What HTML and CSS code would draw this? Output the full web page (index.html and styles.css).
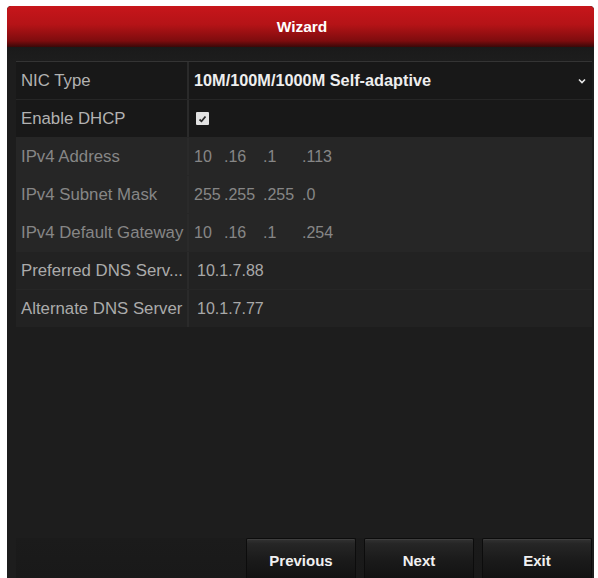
FILE: index.html
```html
<!DOCTYPE html>
<html>
<head>
<meta charset="utf-8">
<link rel="stylesheet" href="styles.css">
</head>
<body>
<div class="panel">
  <div class="header">Wizard</div>
  <div class="body">
    <div class="rows">
      <div class="row on">
        <div class="label">NIC Type</div>
        <div class="value sel">
          <span class="seltext">10M/100M/1000M Self-adaptive</span>
          <svg class="chev" width="8" height="6" viewBox="0 0 8 6"><path d="M1 1.5 L4 4.5 L7 1.5" fill="none" stroke="#e8e8e8" stroke-width="1.6"/></svg>
        </div>
      </div>
      <div class="row on">
        <div class="label">Enable DHCP</div>
        <div class="value">
          <span class="check"><svg width="9" height="8" viewBox="0 0 9 8"><path d="M1.5 4.5 L3.5 6.3 L7.5 1.5" fill="none" stroke="#2a2a2a" stroke-width="1.8"/></svg></span>
        </div>
      </div>
      <div class="row off">
        <div class="label">IPv4 Address</div>
        <div class="value ip"><span class="o1">10</span><span class="o">.16</span><span class="o">.1</span><span class="o">.113</span></div>
      </div>
      <div class="row off">
        <div class="label">IPv4 Subnet Mask</div>
        <div class="value ip"><span class="o1">255</span><span class="o">.255</span><span class="o">.255</span><span class="o">.0</span></div>
      </div>
      <div class="row off">
        <div class="label">IPv4 Default Gateway</div>
        <div class="value ip"><span class="o1">10</span><span class="o">.16</span><span class="o">.1</span><span class="o">.254</span></div>
      </div>
      <div class="row dns">
        <div class="label">Preferred DNS Serv...</div>
        <div class="value dv">10.1.7.88</div>
      </div>
      <div class="row dns">
        <div class="label">Alternate DNS Server</div>
        <div class="value dv">10.1.7.77</div>
      </div>
    </div>
    <div class="footer">
      <button class="btn">Previous</button>
      <button class="btn">Next</button>
      <button class="btn">Exit</button>
    </div>
  </div>
</div>
</body>
</html>
```
FILE: styles.css
```css
html, body {
  margin: 0;
  padding: 0;
  background: #ffffff;
}
body {
  padding: 6px 4px 0 7px;
  height: 578px;
  box-sizing: border-box;
  overflow: hidden;
  font-family: "Liberation Sans", Arial, sans-serif;
}
.panel {
  width: 587px;
  height: 572px;
  background: #1d1d1d;
  border-radius: 4px 4px 0 0;
  display: flex;
  flex-direction: column;
  overflow: hidden;
}
.header {
  height: 41px;
  background: linear-gradient(to bottom, #c7161b 0%, #b51317 45%, #7e0c0e 85%, #3a0808 100%);
  color: #ffffff;
  font-weight: bold;
  font-size: 15.5px;
  display: flex;
  align-items: center;
  justify-content: center;
  padding-left: 3px;
  border-radius: 4px 4px 0 0;
}
.body {
  flex: 1;
  display: flex;
  flex-direction: column;
  padding: 0 2px 0 9px;
  background: linear-gradient(to bottom, #1a1a1a 0px, #1d1d1d 14px);
}
.rows {
  margin-top: 14px;
  border-top: 1px solid #343434;
  display: flex;
  flex-direction: column;
  gap: 1px;
  background: #262626;
}
.row {
  height: 37px;
  display: flex;
  gap: 2px;
  font-size: 16.8px;
  background: #2a2a2a;
}
.label {
  width: 166px;
  padding-left: 5px;
  display: flex;
  align-items: center;
  white-space: nowrap;
  overflow: hidden;
}
.value {
  flex: 1;
  display: flex;
  align-items: center;
  padding-left: 5px;
  position: relative;
  font-size: 16px;
}
.row.on .label, .row.on .value { background: #181818; }
.row.on .label { color: #b2b2b2; }
.row.off .label, .row.off .value { background: #262626; }
.row.off .label { color: #868686; }
.row.off .value { color: #868686; }
.row.dns .label, .row.dns .value { background: #222222; }
.row.dns .label { color: #ababab; }
.row.dns .value { color: #a8a8a8; padding-left: 8px; }
.sel { justify-content: space-between; padding-right: 6px; }
.seltext { color: #eeeeee; font-weight: bold; font-size: 16.3px; }
.chev { margin-top: 1px; }
.check {
  width: 13px;
  height: 13px;
  margin-left: 2px;
  background: #e2e2e2;
  border-radius: 1px;
  display: flex;
  align-items: center;
  justify-content: center;
}
.ip .o1 { width: 30px; }
.ip .o { width: 39px; }
.footer {
  margin-top: auto;
  display: flex;
  justify-content: flex-end;
  gap: 8px;
  height: 40px;
  background: linear-gradient(to bottom, #1b1b1b, #191919);
}
.btn {
  width: 110px;
  height: 40px;
  margin: 0;
  border: 1px solid #0c0c0c;
  border-bottom: none;
  border-radius: 2px 2px 0 0;
  background: linear-gradient(to bottom, #333333 0%, #262626 12%, #1a1a1a 55%, #121212 100%);
  box-shadow: inset 0 1px 0 #3e3e3e;
  color: #f0f0f0;
  font-family: "Liberation Sans", Arial, sans-serif;
  font-weight: bold;
  font-size: 15px;
  padding: 4px 0 0 0;
}
```
